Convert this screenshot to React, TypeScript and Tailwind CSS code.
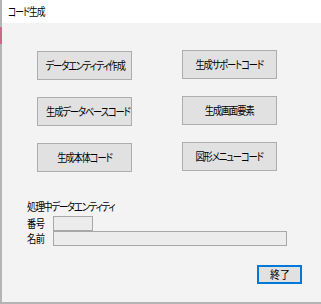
import React from 'react';

const font = { fontFamily: '"Noto Sans CJK JP", "Noto Sans", sans-serif' };

function Btn({ label }: { label: string }) {
  return (
    <button className="w-[95px] h-[29px] bg-[#e1e1e1] border border-[#adadad] text-[11px] text-black leading-none whitespace-nowrap">
      <span className="inline-block tracking-[-1.3px] [font-feature-settings:'palt'] scale-x-[0.84]">{label}</span>
    </button>
  );
}

export default function App() {
  return (
    <div style={font} className="relative w-[321px] h-[304px] bg-white overflow-hidden flex flex-col">
      <div className="absolute left-0 top-[27px] w-[2px] h-[17px] bg-[#c96a86]" />
      <div className="h-[23px] flex items-center pl-[6px] border-l-2 border-[#b4b4b4] text-[11px] text-black whitespace-nowrap bg-white">
        <span className="inline-block origin-left tracking-[-1.3px] [font-feature-settings:'palt'] scale-x-[0.8]">コード生成</span>
      </div>
      <div className="flex-1 flex flex-col bg-[#f3f3f3] border-l-2 border-b-2 border-[#b4b4b4]">
        <div className="flex pl-[35px] gap-[50px]">
          <div className="flex flex-col gap-[17px] mt-[28px]">
            <Btn label="データエンティティ作成" />
            <Btn label="生成データベースコード" />
            <Btn label="生成本体コード" />
          </div>
          <div className="flex flex-col gap-[17px] mt-[27px]">
            <Btn label="生成サポートコード" />
            <Btn label="生成画面要素" />
            <Btn label="図形メニューコード" />
          </div>
        </div>
        <div className="mt-[29px] pl-[25px] text-[11px] text-black leading-none whitespace-nowrap">
          <span className="inline-block origin-left tracking-[-1.3px] [font-feature-settings:'palt'] scale-x-[0.84]">処理中データエンティティ</span>
        </div>
        <div className="mt-[4px] pl-[25px] flex items-center">
          <span className="w-[26px] text-[11px] leading-none text-black">
            <span className="inline-block origin-left tracking-[-0.5px] scale-x-[0.84]">番号</span>
          </span>
          <div className="w-[40px] h-[15px] bg-[#ececec] border border-[#a8a8a8]" />
        </div>
        <div className="pl-[25px] flex items-center">
          <span className="w-[26px] text-[11px] leading-none text-black">
            <span className="inline-block origin-left tracking-[-0.5px] scale-x-[0.84]">名前</span>
          </span>
          <div className="w-[234px] h-[15px] bg-[#ececec] border border-[#a8a8a8]" />
        </div>
        <div className="mt-[19px] flex justify-end pr-[19px]">
          <button className="w-[45px] h-[19px] bg-[#e1e1e1] border-2 border-[#0078d7] text-[11px] leading-none text-black">
            <span className="inline-block scale-x-[0.9]">終了</span>
          </button>
        </div>
      </div>
    </div>
  );
}
